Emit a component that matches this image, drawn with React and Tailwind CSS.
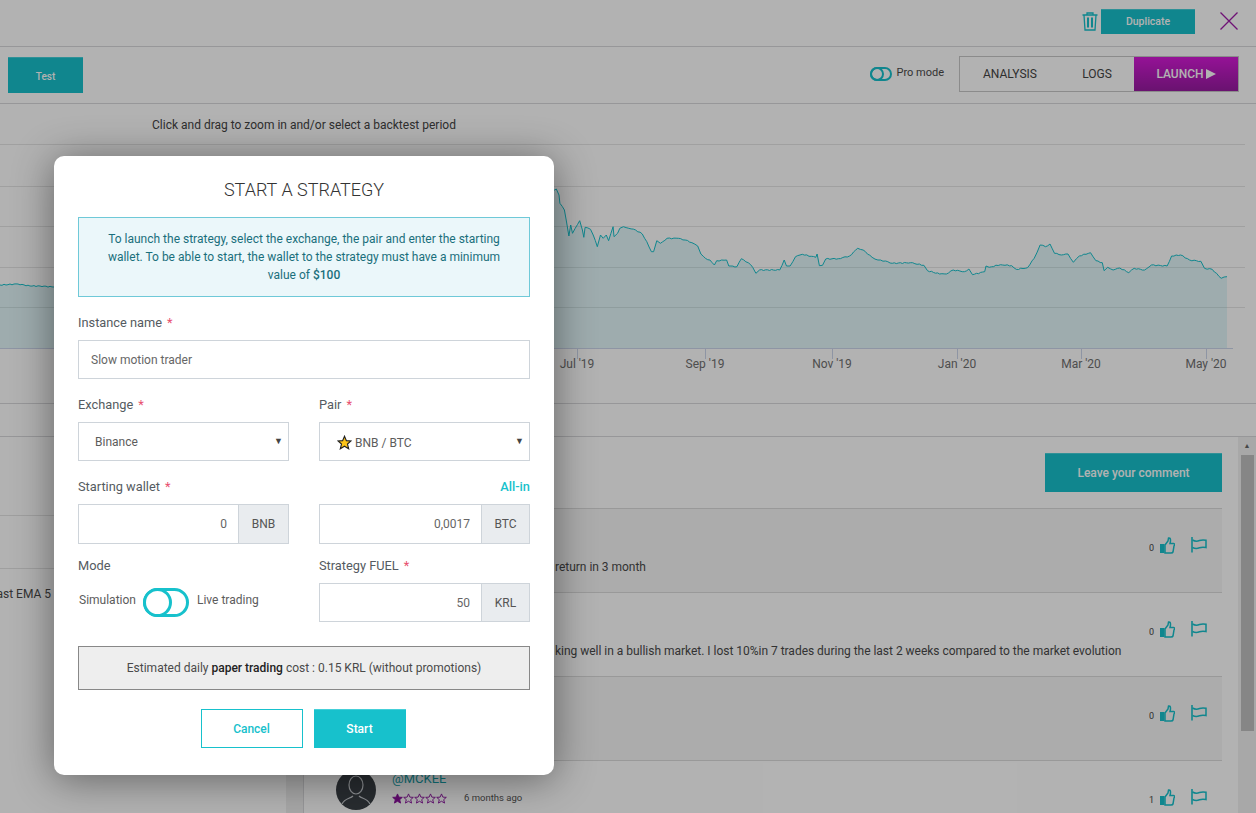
import React from 'react';

// traced from the reference, in chart px
const RAW = [[10,30],[14,27],[20,45],[22,70],[32,90],[36,120],[42,168],[46,135],[50,160],[56,145],[66,122],[72,150],[75,172],[78,142],[90,148],[96,165],[105,200],[112,165],[118,175],[125,165],[130,182],[140,140],[142,170],[150,160],[155,145],[163,140],[175,145],[190,150],[205,162],[215,185],[225,215],[230,215],[237,182],[245,190],[260,175],[285,175],[300,180],[315,188],[328,198],[335,222],[345,235],[355,240],[365,255],[370,242],[392,240],[397,258],[415,260],[425,236],[440,248],[450,262],[457,280],[465,270],[510,270],[520,240],[525,258],[533,258],[545,230],[560,223],[590,232],[593,222],[598,257],[605,256],[612,237],[640,236],[665,228],[683,205],[695,210],[715,232],[728,240],[745,243],[760,250],[800,248],[830,256],[838,272],[865,282],[880,282],[895,270],[920,275],[930,267],[938,284],[965,275],[968,258],[975,262],[1000,254],[1025,257],[1035,268],[1060,263],[1075,235],[1088,195],[1100,200],[1110,192],[1120,220],[1135,225],[1150,222],[1162,247],[1175,228],[1200,218],[1212,242],[1226,248],[1230,272],[1238,262],[1250,270],[1265,264],[1285,278],[1297,265],[1320,270],[1335,255],[1370,258],[1380,228],[1400,225],[1420,240],[1445,244],[1453,265],[1470,268],[1490,295],[1503,290]];

const traced = RAW.map(([x, y]) => [550 + x / 2.22, 76 + y / 3]);
const anchors = [[0, 181], [18, 180], [30, 182], [40, 182], [54, 183], ...traced];

const pts = [];
anchors.forEach((p, i) => {
  const next = anchors[i + 1];
  pts.push(p);
  if (!next) return;
  const steps = Math.floor((next[0] - p[0]) / 2);
  for (let s = 1; s < steps; s++) {
    const t = s / steps;
    const wob = Math.sin(p[0] * 1.7 + s * 2.3) * 0.5;
    pts.push([p[0] + (next[0] - p[0]) * t, p[1] + (next[1] - p[1]) * t + wob]);
  }
});
const line = pts.map(([x, y]) => `${x.toFixed(1)},${y.toFixed(1)}`).join(' ');

const TICKS = [[577, "Jul '19"], [705, "Sep '19"], [832, "Nov '19"], [957, "Jan '20"], [1081, "Mar '20"], [1206, "May '20"]];

function Chart() {
  return (
    <svg width="1256" height="299" className="block">
      {[40, 82, 122, 163, 203].map((y) => (
        <line key={y} x1="0" x2="1245" y1={y + 0.5} y2={y + 0.5} stroke="#e6e6e6" />
      ))}
      <polygon points={`0,244 ${line} 1227,244`} fill="#17c1cc" fillOpacity="0.12" />
      <polyline points={line} fill="none" stroke="#17c1cc" strokeWidth="1" />
      <line x1="0" x2="1233" y1="244.5" y2="244.5" stroke="#ccd6eb" />
      {TICKS.map(([x, label]) => (
        <g key={x}>
          <line x1={x + 0.5} x2={x + 0.5} y1="245" y2="255" stroke="#ccd6eb" />
          <text x={x} y="264" textAnchor="middle" fontSize="12" fill="#707070">{label}</text>
        </g>
      ))}
    </svg>
  );
}

function Thumb() {
  return (
    <svg width="15" height="17" viewBox="0 0 15 17" className="text-[#17c1cc]">
      <rect x="0" y="7" width="4.500" height="9" fill="currentColor" />
      <path d="M5 8 L8 4 L8.500 1 C10.500 0.500 11 3 10 6.500 L13.500 6.500 C15 6.500 14.800 8.500 14 9 L13 15 C12.800 15.800 12 16 11 16 L5 16 Z" fill="none" stroke="currentColor" strokeWidth="1.500" />
    </svg>
  );
}

function Flag() {
  return (
    <svg width="17" height="16" viewBox="0 0 17 16" className="text-[#17c1cc]">
      <path d="M2 0 V15.500" fill="none" stroke="currentColor" strokeWidth="1.600" />
      <path d="M2.500 3 C5 4.500 7 4.500 9.500 3.500 C11.500 2.800 13.500 2.800 16 3.200 V10.500 C13.500 10 11.500 10 9.500 10.800 C7 11.800 5 11.800 2.500 10.500" fill="none" stroke="currentColor" strokeWidth="1.500" />
    </svg>
  );
}

function Star({ filled }) {
  return (
    <svg width="11" height="11" viewBox="0 0 24 24">
      <polygon
        points="12,2 15,9 22.500,9.500 16.800,14.500 18.700,22 12,18 5.300,22 7.200,14.500 1.500,9.500 9,9"
        fill={filled ? '#8a0f9c' : 'none'}
        stroke="#8a0f9c"
        strokeWidth="2"
      />
    </svg>
  );
}

function Avatar() {
  return (
    <svg width="40" height="40" viewBox="0 0 40 40" className="shrink-0">
      <circle cx="20" cy="20" r="20" fill="#3a3f45" />
      <ellipse cx="20" cy="15" rx="7" ry="9" fill="none" stroke="#c8ccd0" strokeWidth="1.200" />
      <path d="M6 34 C9 28 14 29 17 26 M34 34 C31 28 26 29 23 26" fill="none" stroke="#c8ccd0" strokeWidth="1.200" />
    </svg>
  );
}

function CommentRow({ count, shaded, text, user }) {
  return (
    <div className={`flex h-[84px] border-t border-[#dcdcdc] pr-[15px] ${shaded ? 'bg-[#f7f7f7]' : ''}`}>
      <div className="flex-1">
        {text && <p className="pl-[251px] pt-[50px] text-xs tracking-[-0.02px] text-[#4a4a4a] whitespace-nowrap">{text}</p>}
        {user && (
          <div className="flex gap-4 pl-[32px] pt-[9px]">
            <Avatar />
            <div>
              <div className="text-[13px] leading-[18px] text-[#17a3ad]">{user}</div>
              <div className="flex items-center mt-[3px]">
                <Star filled /><Star /><Star /><Star /><Star />
                <span className="ml-[17px] text-[9.5px] text-[#555]">6 months ago</span>
              </div>
            </div>
          </div>
        )}
      </div>
      <div className="flex items-start gap-[15px] pt-[28px]">
        <div className="flex items-end gap-[6px]">
          <span className="text-[9px] leading-3 text-[#444]">{count}</span>
          <Thumb />
        </div>
        <Flag />
      </div>
    </div>
  );
}

function Label({ children, required }) {
  return (
    <div className="h-4 pt-px text-[12.8px] leading-4 text-[#555b61]">
      {children}
      {required && <span className="ml-[5px] text-[#e8506e]">*</span>}
    </div>
  );
}

function Addon({ value, unit, height, addonWidth }) {
  return (
    <div className={`mt-[10px] flex border border-[#ced4da] ${height}`}>
      <div className="flex-1 flex items-center justify-end pr-[11px] text-xs text-[#666]">{value}</div>
      <div className={`flex items-center justify-center bg-[#e9ecef] border-l border-[#ced4da] text-xs text-[#555] ${addonWidth}`}>{unit}</div>
    </div>
  );
}

function SelectBox({ children }) {
  return (
    <div className="mt-[10px] h-[39px] flex items-center justify-between border border-[#ced4da] pl-[16px] pr-[5px] text-xs text-[#5c5c5c]">
      <div className="flex items-center">{children}</div>
      <span className="text-[9px] text-[#444] -mt-[2px]">▼</span>
    </div>
  );
}

function StartModal() {
  return (
    <div className="absolute left-[54px] top-[156px] w-[500px] bg-white rounded-[10px] px-[24px] pt-[22px] pb-[27px] shadow-[0_4px_40px_rgba(0,0,0,0.45)]">
      <h2 className="text-center text-lg leading-6 font-light text-[#333]">START A STRATEGY</h2>
      <div className="mt-[15px] border border-[#6fc9d8] bg-[#ebf7fa] px-[24px] py-[12px] text-center text-xs leading-[18px] text-[#1a6f7c]">
        To launch the strategy, select the exchange, the pair and enter the starting wallet. To be able to start, the wallet to the strategy must have a minimum value of <b className="font-medium">$100</b>
      </div>

      <div className="mt-[17px]">
        <Label required>Instance name</Label>
        <div className="mt-[10px] h-[39px] flex items-center border border-[#ced4da] px-[12px] text-xs text-[#666]">Slow motion trader</div>
      </div>

      <div className="mt-[17px] grid grid-cols-2 gap-x-[30px]">
        <div>
          <Label required>Exchange</Label>
          <SelectBox>Binance</SelectBox>
        </div>
        <div>
          <Label required>Pair</Label>
          <SelectBox>
            <svg width="15" height="15" viewBox="0 0 24 24" className="mr-[3px] ml-[1px] mt-[2px]">
              <polygon points="12,2 15,9 22.500,9.500 16.800,14.500 18.700,22 12,18 5.300,22 7.200,14.500 1.500,9.500 9,9" fill="#fcc419" stroke="#222" strokeWidth="1.800" />
            </svg>
            <span className="mt-[2px]">BNB / BTC</span>
          </SelectBox>
        </div>
      </div>

      <div className="mt-[17px] grid grid-cols-2 gap-x-[30px]">
        <div>
          <Label required>Starting wallet</Label>
          <Addon value="0" unit="BNB" height="h-[40px]" addonWidth="w-[50px]" />
        </div>
        <div>
          <div className="h-4 pt-px text-right text-[12.8px] leading-4 font-medium text-[#17c1cc]">All-in</div>
          <Addon value="0,0017" unit="BTC" height="h-[40px]" addonWidth="w-[48px]" />
        </div>
      </div>

      <div className="mt-[13px] grid grid-cols-2 gap-x-[30px]">
        <div>
          <Label>Mode</Label>
          <div className="mt-[15px] flex items-center gap-[8px] text-xs text-[#5c5c5c]">
            <span className="ml-[1px] -mr-[1px] -mt-[6px]">Simulation</span>
            <div className="relative w-[46px] h-[29px] rounded-full border-[3px] border-[#17c1cc]">
              <div className="absolute -left-[3px] -top-[3px] w-[29px] h-[29px] rounded-full border-[3px] border-[#17c1cc] bg-white" />
            </div>
            <span className="-mt-[6px]">Live trading</span>
          </div>
        </div>
        <div>
          <Label required>Strategy FUEL</Label>
          <Addon value="50" unit="KRL" height="h-[39px]" addonWidth="w-[48px]" />
        </div>
      </div>

      <div className="mt-[24px] h-[44px] flex items-center justify-center border border-[#888] bg-[#eeeeee] text-xs text-[#4a4a4a]">
        <span>Estimated daily <b className="font-medium text-[#222]">paper trading</b> cost : 0.15 KRL (without promotions)</span>
      </div>

      <div className="mt-[19px] flex justify-center gap-[11px] pr-[2px]">
        <button className="w-[102px] h-[39px] border border-[#17c1cc] bg-white text-xs font-medium text-[#17c1cc]">Cancel</button>
        <button className="w-[92px] h-[39px] border-t border-[#45d0d9] bg-[#17c1cc] text-xs font-medium text-white">Start</button>
      </div>
    </div>
  );
}

export default function App() {
  return (
    <div className="relative h-[813px] w-[1256px] overflow-hidden bg-white font-['Roboto',sans-serif]">
      {/* top bar */}
      <div className="h-[47px] flex items-center justify-end border-b border-[#d8d8dc] pr-[18px] pb-[4px]">
        <svg width="16" height="19" viewBox="0 0 16 19" fill="none" stroke="#17c1cc" strokeWidth="1.300" className="mr-[3px]">
          <path d="M0.500 3 H15.500 M5 3 V1 H11 V3 M2 3 L3 18 H13 L14 3" />
          <path d="M6 5.500 V15.500 M10 5.500 V15.500" strokeWidth="2" />
        </svg>
        <button className="w-[94px] h-[25px] border-t border-[#45d0d9] bg-[#17c1cc] text-[10.5px] font-medium text-white">Duplicate</button>
        <svg width="18" height="18" viewBox="0 0 18 18" className="ml-[25px]">
          <path d="M0.500 0.500 L17.500 17.500 M17.500 0.500 L0.500 17.500" stroke="#a01aa8" strokeWidth="1.300" />
        </svg>
      </div>

      {/* toolbar */}
      <div className="h-[57px] flex items-center justify-between border-b border-[#d8d8dc] pl-[8px] pr-[17px]">
        <button className="w-[75px] h-[36px] pt-px border-t border-[#45d0d9] bg-[#17c1cc] text-[10px] font-medium text-white">Test</button>
        <div className="flex items-center -mt-[3px]">
          <div className="relative w-[22px] h-[14px] rounded-full border-2 border-[#17c1cc]">
            <div className="absolute -left-[2px] -top-[2px] w-[14px] h-[14px] rounded-full border-2 border-[#17c1cc]" />
          </div>
          <span className="ml-[4px] text-[11px] text-[#4a4a4a]">Pro mode</span>
          <div className="ml-[15px] w-[280px] h-[36px] flex border border-[#c8c8c8] text-xs text-[#444]">
            <div className="w-[100px] flex items-center justify-center">ANALYSIS</div>
            <div className="w-[74px] flex items-center justify-center">LOGS</div>
            <div className="flex-1 flex items-center justify-center gap-[2px] bg-gradient-to-b from-[#d61ad8] to-[#971aa0] font-medium text-white">
              LAUNCH
              <svg width="10" height="10" viewBox="0 0 10 10"><polygon points="0,0 10,5 0,10" fill="#ffffff" /></svg>
            </div>
          </div>
        </div>
      </div>

      {/* chart */}
      <div className="relative h-[300px] border-b border-[#d8d8dc]">
        <p className="absolute left-[152px] top-[13px] text-xs text-[#444]">Click and drag to zoom in and/or select a backtest period</p>
        <Chart />
      </div>

      {/* empty tab strip */}
      <div className="h-[33px] border-b border-[#d8d8dc]" />

      {/* bottom panels */}
      <div className="flex h-[376px]">
        <div className="w-[286px] shrink-0">
          <div className="h-[79px] border-b border-[#e4e4e4]" />
          <div className="h-[53px] border-b border-[#e4e4e4]" />
          <p className="-ml-[10px] mt-[17px] text-xs whitespace-nowrap text-[#4a4a4a]">Fast EMA 5</p>
        </div>
        <div className="w-[17px] shrink-0 bg-[#f0f0f0]" />
        <div className="flex-1 border-l border-[#d8d8dc] pt-[16px]">
          <div className="flex justify-end">
            <button className="w-[177px] h-[39px] border-t border-[#45d0d9] bg-[#17c1cc] text-xs font-medium text-white">Leave your comment</button>
          </div>
          <div className="mt-[16px]">
            <CommentRow count={0} shaded text="return in 3 month" />
            <CommentRow count={0} text="king well in a bullish market. I lost 10%in 7 trades during the last 2 weeks compared to the market evolution" />
            <CommentRow count={0} shaded />
            <CommentRow count={1} user="@MCKEE" />
          </div>
        </div>
        <div className="w-[18px] ml-[16px] shrink-0 bg-[#f1f1f1] flex flex-col items-center">
          <span className="mt-[4px] text-[7px] leading-[10px] text-[#666]">▲</span>
          <div className="mt-[4px] w-[13px] h-[276px] bg-[#c1c1c1]" />
        </div>
      </div>

      {/* dimmed backdrop + dialog */}
      <div className="absolute inset-0 bg-black/30" />
      <StartModal />
    </div>
  );
}
